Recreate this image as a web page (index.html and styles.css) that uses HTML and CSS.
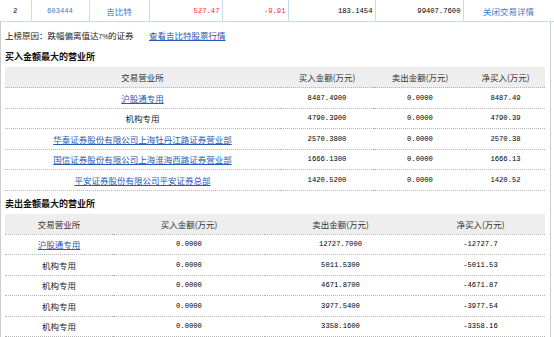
FILE: index.html
```html
<!DOCTYPE html>
<html lang="zh-CN">
<head>
    <meta charset="UTF-8">
    <title>龙虎榜</title>
    <link rel="stylesheet" href="styles.css">
</head>
<body>
    <table class="quote">
        <colgroup>
            <col style="width: 31px"><col style="width: 58px"><col style="width: 60px"><col style="width: 73px">
            <col style="width: 66px"><col style="width: 87px"><col style="width: 88px"><col style="width: 91px">
        </colgroup>
        <tr>
            <td class="num">2</td>
            <td class="num"><a class="lite" href="#">603444</a></td>
            <td><a class="lite" href="#">吉比特</a></td>
            <td class="num right red">527.47</td>
            <td class="num right red">-9.91</td>
            <td class="num right">183.1454</td>
            <td class="num right">99407.7600</td>
            <td><a class="lite" href="#">关闭交易详情</a></td>
        </tr>
    </table>

    <div class="detail">
        <div class="reason">
            <span class="reason-text">上榜原因：跌幅偏离值达<span class="small">7%</span>的证券</span>
            <a class="link" href="#">查看吉比特股票行情</a>
        </div>

        <h4 class="section-title">买入金额最大的营业所</h4>
        <table class="deals">
            <colgroup>
                <col style="width: 275px"><col style="width: 94px"><col style="width: 92px"><col style="width: 79px">
            </colgroup>
            <tr class="head">
                <td>交易营业所</td><td>买入金额(万元)</td><td>卖出金额(万元)</td><td>净买入(万元)</td>
            </tr>
            <tr>
                <td><a class="link" href="#">沪股通专用</a></td>
                <td class="num">8487.4900</td><td class="num">0.0000</td><td class="num">8487.49</td>
            </tr>
            <tr>
                <td>机构专用</td>
                <td class="num">4790.3900</td><td class="num">0.0000</td><td class="num">4790.39</td>
            </tr>
            <tr>
                <td><a class="link" href="#">华泰证券股份有限公司上海牡丹江路证券营业部</a></td>
                <td class="num">2570.3800</td><td class="num">0.0000</td><td class="num">2570.38</td>
            </tr>
            <tr>
                <td><a class="link" href="#">国信证券股份有限公司上海淮海西路证券营业部</a></td>
                <td class="num">1666.1300</td><td class="num">0.0000</td><td class="num">1666.13</td>
            </tr>
            <tr>
                <td><a class="link" href="#">平安证券股份有限公司平安证券总部</a></td>
                <td class="num">1420.5200</td><td class="num">0.0000</td><td class="num">1420.52</td>
            </tr>
        </table>

        <h4 class="section-title">卖出金额最大的营业所</h4>
        <table class="deals">
            <colgroup>
                <col style="width: 108px"><col style="width: 152px"><col style="width: 151px"><col style="width: 129px">
            </colgroup>
            <tr class="head">
                <td>交易营业所</td><td>买入金额(万元)</td><td>卖出金额(万元)</td><td>净买入(万元)</td>
            </tr>
            <tr>
                <td><a class="link" href="#">沪股通专用</a></td>
                <td class="num">0.0000</td><td class="num">12727.7000</td><td class="num">-12727.7</td>
            </tr>
            <tr>
                <td>机构专用</td>
                <td class="num">0.0000</td><td class="num">5011.5300</td><td class="num">-5011.53</td>
            </tr>
            <tr>
                <td>机构专用</td>
                <td class="num">0.0000</td><td class="num">4671.8700</td><td class="num">-4671.87</td>
            </tr>
            <tr>
                <td>机构专用</td>
                <td class="num">0.0000</td><td class="num">3977.5400</td><td class="num">-3977.54</td>
            </tr>
            <tr>
                <td>机构专用</td>
                <td class="num">0.0000</td><td class="num">3358.1600</td><td class="num">-3358.16</td>
            </tr>
        </table>
    </div>
</body>
</html>
```

FILE: styles.css
```css
html, body {
    margin: 0;
    padding: 0;
}
body {
    width: 554px;
    background-color: #ffffff;
    color: #222222;
    font-family: "Noto Sans CJK SC", "Liberation Sans", sans-serif;
    font-size: 8.5px;
}
a {
    text-decoration: none;
}
.num {
    font-family: "Liberation Mono", monospace;
    font-size: 7.2px;
    color: #000000;
}
.right {
    text-align: right !important;
}
.red {
    color: #ff2a2a;
}
.lite {
    color: #3d7ccc;
}
.link {
    color: #2a5ab5;
    text-decoration: underline;
}

/* quote row on top */
.quote {
    width: 554px;
    table-layout: fixed;
    border-collapse: collapse;
}
.quote td {
    height: 21px;
    padding: 0 2px;
    border-right: 1px solid #c9dbee;
    border-bottom: 1px solid #c9dbee;
    text-align: center;
    white-space: nowrap;
}

/* detail panel */
.detail {
    width: 551px;
    box-sizing: border-box;
    padding: 4px 5px 2px 4px;
    border-left: 1px solid #cccccc;
    border-right: 1px solid #cccccc;
}
.reason {
    display: flex;
    line-height: 18px;
}
.reason-text {
    width: 144px;
}
.small {
    font-family: "Liberation Sans", sans-serif;
    font-size: 6.5px;
}
.section-title {
    margin: 2px 0 1px 0;
    font-size: 9px;
    font-weight: bold;
    line-height: 18px;
    color: #111111;
}
.deals {
    width: 540px;
    table-layout: fixed;
    border-collapse: collapse;
    margin-bottom: 4px;
}
.deals td {
    height: 19.5px;
    padding: 0;
    text-align: center;
    white-space: nowrap;
    border-bottom: 1px dotted #b5b5b5;
}
.deals .head td {
    height: 20px;
    background-color: #eeeeee;
    color: #333333;
}
```
